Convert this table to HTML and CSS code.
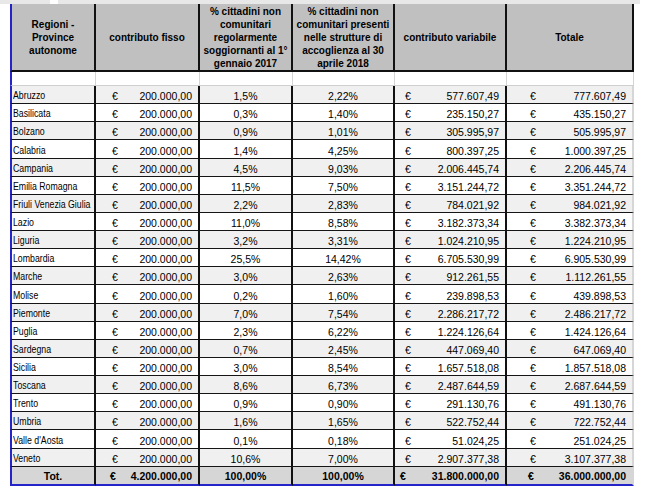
FILE: index.html
```html
<!DOCTYPE html>
<html lang="it">
<head>
<meta charset="utf-8">
<title>Riparto contributi</title>
<link rel="stylesheet" href="styles.css">
</head>
<body>
<div class="sheet">
  <div class="topline"><span class="seg a"></span><span class="seg b"></span></div>
  <table class="grid">
    <colgroup>
      <col class="w1"><col class="w2"><col class="w3"><col class="w4"><col class="w5"><col class="w6">
    </colgroup>
    <thead>
      <tr class="head">
        <th>Regioni -<br>Province<br>autonome</th>
        <th>contributo fisso</th>
        <th>% cittadini non<br>comunitari<br>regolarmente<br>soggiornanti al 1°<br>gennaio 2017</th>
        <th>% cittadini non<br>comunitari presenti<br>nelle strutture di<br>accoglienza al 30<br>aprile 2018</th>
        <th>contributo variabile</th>
        <th>Totale</th>
      </tr>
    </thead>
    <tbody>
      <tr class="spacer"><td></td><td></td><td></td><td></td><td></td><td></td></tr>
      <tr class="row"><td class="name"><span>Abruzzo</span></td><td class="c2"><div class="m"><span>€</span><span>200.000,00</span></div></td><td class="pct">1,5%</td><td class="pct">2,22%</td><td class="c5"><div class="m"><span>€</span><span>577.607,49</span></div></td><td class="c6"><div class="m"><span>€</span><span>777.607,49</span></div></td></tr>
      <tr class="row"><td class="name"><span>Basilicata</span></td><td class="c2"><div class="m"><span>€</span><span>200.000,00</span></div></td><td class="pct">0,3%</td><td class="pct">1,40%</td><td class="c5"><div class="m"><span>€</span><span>235.150,27</span></div></td><td class="c6"><div class="m"><span>€</span><span>435.150,27</span></div></td></tr>
      <tr class="row"><td class="name"><span>Bolzano</span></td><td class="c2"><div class="m"><span>€</span><span>200.000,00</span></div></td><td class="pct">0,9%</td><td class="pct">1,01%</td><td class="c5"><div class="m"><span>€</span><span>305.995,97</span></div></td><td class="c6"><div class="m"><span>€</span><span>505.995,97</span></div></td></tr>
      <tr class="row"><td class="name"><span>Calabria</span></td><td class="c2"><div class="m"><span>€</span><span>200.000,00</span></div></td><td class="pct">1,4%</td><td class="pct">4,25%</td><td class="c5"><div class="m"><span>€</span><span>800.397,25</span></div></td><td class="c6"><div class="m"><span>€</span><span>1.000.397,25</span></div></td></tr>
      <tr class="row"><td class="name"><span>Campania</span></td><td class="c2"><div class="m"><span>€</span><span>200.000,00</span></div></td><td class="pct">4,5%</td><td class="pct">9,03%</td><td class="c5"><div class="m"><span>€</span><span>2.006.445,74</span></div></td><td class="c6"><div class="m"><span>€</span><span>2.206.445,74</span></div></td></tr>
      <tr class="row"><td class="name"><span>Emilia Romagna</span></td><td class="c2"><div class="m"><span>€</span><span>200.000,00</span></div></td><td class="pct">11,5%</td><td class="pct">7,50%</td><td class="c5"><div class="m"><span>€</span><span>3.151.244,72</span></div></td><td class="c6"><div class="m"><span>€</span><span>3.351.244,72</span></div></td></tr>
      <tr class="row"><td class="name"><span>Friuli Venezia Giulia</span></td><td class="c2"><div class="m"><span>€</span><span>200.000,00</span></div></td><td class="pct">2,2%</td><td class="pct">2,83%</td><td class="c5"><div class="m"><span>€</span><span>784.021,92</span></div></td><td class="c6"><div class="m"><span>€</span><span>984.021,92</span></div></td></tr>
      <tr class="row"><td class="name"><span>Lazio</span></td><td class="c2"><div class="m"><span>€</span><span>200.000,00</span></div></td><td class="pct">11,0%</td><td class="pct">8,58%</td><td class="c5"><div class="m"><span>€</span><span>3.182.373,34</span></div></td><td class="c6"><div class="m"><span>€</span><span>3.382.373,34</span></div></td></tr>
      <tr class="row"><td class="name"><span>Liguria</span></td><td class="c2"><div class="m"><span>€</span><span>200.000,00</span></div></td><td class="pct">3,2%</td><td class="pct">3,31%</td><td class="c5"><div class="m"><span>€</span><span>1.024.210,95</span></div></td><td class="c6"><div class="m"><span>€</span><span>1.224.210,95</span></div></td></tr>
      <tr class="row"><td class="name"><span>Lombardia</span></td><td class="c2"><div class="m"><span>€</span><span>200.000,00</span></div></td><td class="pct">25,5%</td><td class="pct">14,42%</td><td class="c5"><div class="m"><span>€</span><span>6.705.530,99</span></div></td><td class="c6"><div class="m"><span>€</span><span>6.905.530,99</span></div></td></tr>
      <tr class="row"><td class="name"><span>Marche</span></td><td class="c2"><div class="m"><span>€</span><span>200.000,00</span></div></td><td class="pct">3,0%</td><td class="pct">2,63%</td><td class="c5"><div class="m"><span>€</span><span>912.261,55</span></div></td><td class="c6"><div class="m"><span>€</span><span>1.112.261,55</span></div></td></tr>
      <tr class="row"><td class="name"><span>Molise</span></td><td class="c2"><div class="m"><span>€</span><span>200.000,00</span></div></td><td class="pct">0,2%</td><td class="pct">1,60%</td><td class="c5"><div class="m"><span>€</span><span>239.898,53</span></div></td><td class="c6"><div class="m"><span>€</span><span>439.898,53</span></div></td></tr>
      <tr class="row"><td class="name"><span>Piemonte</span></td><td class="c2"><div class="m"><span>€</span><span>200.000,00</span></div></td><td class="pct">7,0%</td><td class="pct">7,54%</td><td class="c5"><div class="m"><span>€</span><span>2.286.217,72</span></div></td><td class="c6"><div class="m"><span>€</span><span>2.486.217,72</span></div></td></tr>
      <tr class="row"><td class="name"><span>Puglia</span></td><td class="c2"><div class="m"><span>€</span><span>200.000,00</span></div></td><td class="pct">2,3%</td><td class="pct">6,22%</td><td class="c5"><div class="m"><span>€</span><span>1.224.126,64</span></div></td><td class="c6"><div class="m"><span>€</span><span>1.424.126,64</span></div></td></tr>
      <tr class="row"><td class="name"><span>Sardegna</span></td><td class="c2"><div class="m"><span>€</span><span>200.000,00</span></div></td><td class="pct">0,7%</td><td class="pct">2,45%</td><td class="c5"><div class="m"><span>€</span><span>447.069,40</span></div></td><td class="c6"><div class="m"><span>€</span><span>647.069,40</span></div></td></tr>
      <tr class="row"><td class="name"><span>Sicilia</span></td><td class="c2"><div class="m"><span>€</span><span>200.000,00</span></div></td><td class="pct">3,0%</td><td class="pct">8,54%</td><td class="c5"><div class="m"><span>€</span><span>1.657.518,08</span></div></td><td class="c6"><div class="m"><span>€</span><span>1.857.518,08</span></div></td></tr>
      <tr class="row"><td class="name"><span>Toscana</span></td><td class="c2"><div class="m"><span>€</span><span>200.000,00</span></div></td><td class="pct">8,6%</td><td class="pct">6,73%</td><td class="c5"><div class="m"><span>€</span><span>2.487.644,59</span></div></td><td class="c6"><div class="m"><span>€</span><span>2.687.644,59</span></div></td></tr>
      <tr class="row"><td class="name"><span>Trento</span></td><td class="c2"><div class="m"><span>€</span><span>200.000,00</span></div></td><td class="pct">0,9%</td><td class="pct">0,90%</td><td class="c5"><div class="m"><span>€</span><span>291.130,76</span></div></td><td class="c6"><div class="m"><span>€</span><span>491.130,76</span></div></td></tr>
      <tr class="row"><td class="name"><span>Umbria</span></td><td class="c2"><div class="m"><span>€</span><span>200.000,00</span></div></td><td class="pct">1,6%</td><td class="pct">1,65%</td><td class="c5"><div class="m"><span>€</span><span>522.752,44</span></div></td><td class="c6"><div class="m"><span>€</span><span>722.752,44</span></div></td></tr>
      <tr class="row"><td class="name"><span>Valle d'Aosta</span></td><td class="c2"><div class="m"><span>€</span><span>200.000,00</span></div></td><td class="pct">0,1%</td><td class="pct">0,18%</td><td class="c5"><div class="m"><span>€</span><span>51.024,25</span></div></td><td class="c6"><div class="m"><span>€</span><span>251.024,25</span></div></td></tr>
      <tr class="row"><td class="name"><span>Veneto</span></td><td class="c2"><div class="m"><span>€</span><span>200.000,00</span></div></td><td class="pct">10,6%</td><td class="pct">7,00%</td><td class="c5"><div class="m"><span>€</span><span>2.907.377,38</span></div></td><td class="c6"><div class="m"><span>€</span><span>3.107.377,38</span></div></td></tr>
    </tbody>
    <tfoot>
      <tr class="total"><td class="tname">Tot.</td><td class="c2"><div class="m"><span>€</span><span>4.200.000,00</span></div></td><td class="pct">100,00%</td><td class="pct">100,00%</td><td class="c5"><div class="m"><span>€</span><span>31.800.000,00</span></div></td><td class="c6"><div class="m"><span>€</span><span>36.000.000,00</span></div></td></tr>
    </tfoot>
  </table>
</div>
</body>
</html>
```

FILE: styles.css
```css
html, body {
  margin: 0;
  padding: 0;
  background: #ffffff;
}

.sheet {
  width: 649px;
  height: 496px;
  font-family: "Liberation Sans", Arial, sans-serif;
  color: #000;
}

.topline {
  display: flex;
  height: 4px;
  gap: 8px;
}
.topline .seg { background: #e8e8e8; height: 4px; }
.topline .seg.a { width: 50px; }
.topline .seg.b { width: 582px; }

.grid {
  margin-left: 10px;
  border-collapse: separate;
  border-spacing: 0;
  table-layout: fixed;
  width: 624px;
}

.w1 { width: 86px; }
.w2 { width: 104px; }
.w3 { width: 93px; }
.w4 { width: 102px; }
.w5 { width: 112px; }
.w6 { width: 127px; }

.grid th, .grid td {
  padding: 0;
  box-sizing: border-box;
  border-right: 2px solid #111;
}
.grid th:first-child, .grid td:first-child {
  border-left: 2px solid #2424c8;
}

.head { height: 68px; }
.head th {
  background: #c0c0c0;
  font-size: 10px;
  font-weight: bold;
  line-height: 13px;
  text-align: center;
  vertical-align: middle;
  border-bottom: 2px solid #111;
}

.spacer { height: 14px; }
.spacer td {
  border-right: 1px solid #d4d4d4;
  border-bottom: 1px solid #cfcfcf;
}
.spacer td:first-child { border-right-width: 1px; }

.row { height: 18.14px; }
.row td {
  font-size: 10.5px;
  line-height: 11px;
  vertical-align: bottom;
  border-bottom: 1px solid #151515;
  padding-bottom: 1px;
  white-space: nowrap;
}
.row:nth-child(even) td { background: #f0f0f0; }
.row td:last-child, .total td:last-child { border-right: 2px solid #d6d6d6; }

.row .name {
  font-size: 10.7px;
  padding-left: 1px;
  padding-bottom: 2px;
  overflow: hidden;
}
.name span {
  display: inline-block;
  transform: scaleX(0.82);
  transform-origin: left bottom;
}

.pct { text-align: center; }

.m {
  display: flex;
  justify-content: space-between;
  padding-right: 6px;
}
.c2 .m { padding-left: 16px; }
.c5 .m { padding-left: 10px; }
.c6 .m { padding-left: 23px; }

.total { height: 19px; }
.total td {
  background: #d6d6d6;
  font-size: 10.5px;
  font-weight: bold;
  line-height: 11px;
  vertical-align: bottom;
  padding-bottom: 2px;
  border-bottom: 2px solid #2424c8;
  white-space: nowrap;
}
.total .tname { text-align: center; }
.total .c2 .m { padding-left: 14px; }
.total .c5 .m { padding-left: 5px; }
.total .c6 .m { padding-left: 21px; }
```
